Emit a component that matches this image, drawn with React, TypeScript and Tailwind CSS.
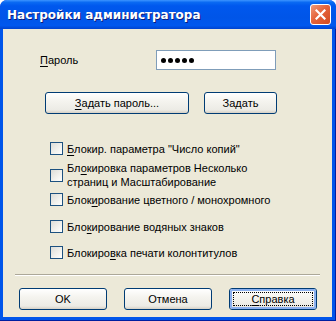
import React from "react";

const font = { fontFamily: '"Liberation Sans", Arial, sans-serif' };

function U({ children }: { children: React.ReactNode }) {
  return <span className="underline underline-offset-[2px]">{children}</span>;
}

function XPButton({
  children,
  className = "",
  isDefault = false,
}: {
  children: React.ReactNode;
  className?: string;
  isDefault?: boolean;
}) {
  return (
    <div
      className={
        "relative flex items-center justify-center rounded-[3px] border border-[#003c74] bg-[linear-gradient(to_bottom,#ffffff_0%,#f5f4ef_40%,#ecebe5_85%,#d6d0c5_100%)] text-[11px] leading-[13px] text-black " +
        className
      }
    >
      {isDefault && (
        <div className="absolute inset-0 rounded-[2px] border-2 border-[#8bb0ef]" />
      )}
      {isDefault && (
        <div className="absolute inset-[3px] border border-dotted border-black" />
      )}
      <span className="relative">{children}</span>
    </div>
  );
}

function Box() {
  return (
    <div className="h-[13px] w-[13px] shrink-0 border border-[#1c5180] bg-[linear-gradient(135deg,#dcdcd7_0%,#f2f2ee_60%,#ffffff_100%)]" />
  );
}

function CheckRow({
  lines,
  className,
}: {
  lines: React.ReactNode[];
  className: string;
}) {
  return (
    <div className={"flex items-center " + className}>
      <Box />
      <div className="ml-[4px] text-[11px] leading-[14px] text-black">
        {lines.map((l, i) => (
          <div key={i}>{l}</div>
        ))}
      </div>
    </div>
  );
}

export default function App() {
  return (
    <div className="h-[321px] w-[336px] overflow-hidden bg-white" style={font}>
      <div className="flex h-[321px] w-[336px] flex-col rounded-t-[7px] bg-[#0831d9]">
        {/* title bar */}
        <div className="flex h-[29px] shrink-0 items-center rounded-t-[7px] bg-[linear-gradient(to_bottom,#3d95ff_0%,#0a6af3_8%,#0058ee_20%,#0055e8_60%,#0058ee_88%,#0043cf_100%)] pl-[7px] pr-[5px]">
          <span
            className="flex-1 font-bold text-white [text-shadow:1px_1px_0_#0f1c78]"
            style={{ fontFamily: '"DejaVu Sans", sans-serif', fontSize: "12px" }}
          >
            Настройки администратора
          </span>
          <div className="flex h-[21px] w-[21px] items-center justify-center rounded-[3px] border border-white bg-[linear-gradient(135deg,#f09a7a_0%,#e5643b_45%,#d24a1f_100%)]">
            <svg width="11" height="11" viewBox="0 0 11 11">
              <path
                d="M1.5 1.5 L9.5 9.5 M9.5 1.5 L1.5 9.5"
                stroke="white"
                strokeWidth="2.2"
                strokeLinecap="square"
              />
            </svg>
          </div>
        </div>
        {/* frame */}
        <div className="flex h-[292px] shrink-0 border-b border-r border-[#001ea0] bg-[#0055ea] px-[3px] pb-[3px]">
          <div className="flex h-[288px] flex-1 flex-col bg-[#ece9d8] text-[11px] text-black">
            {/* password row */}
            <div className="mt-[21px] flex h-[20px] items-center pl-[37px]">
              <span className="w-[116px] leading-[13px]">
                <U>П</U>ароль
              </span>
              <div className="flex h-[20px] w-[120px] items-center gap-[2px] border border-[#7f9db9] bg-white pl-[4px]">
                {[0, 1, 2, 3, 4].map((i) => (
                  <span key={i} className="h-[5px] w-[5px] rounded-full bg-black" />
                ))}
              </div>
            </div>
            {/* buttons row */}
            <div className="mt-[22px] flex h-[22px] pl-[42px]">
              <XPButton className="h-[22px] w-[144px]">
                <U>З</U>адать пароль...
              </XPButton>
              <XPButton className="ml-[15px] h-[22px] w-[73px]">Задать</XPButton>
            </div>
            {/* checkboxes */}
            <div className="flex flex-col pl-[47px]">
              <CheckRow
                className="mt-[28px] h-[13px]"
                lines={[
                  <>
                    <U>Б</U>локир. параметра "Число копий"
                  </>,
                ]}
              />
              <CheckRow
                className="mt-[6px] h-[28px]"
                lines={[
                  <>
                    Бл<U>о</U>кировка параметров Несколько
                  </>,
                  "страниц и Масштабирование",
                ]}
              />
              <CheckRow
                className="mt-[4px] h-[13px]"
                lines={[
                  <>
                    Блок<U>и</U>рование цветного / монохромного
                  </>,
                ]}
              />
              <CheckRow
                className="mt-[14px] h-[13px]"
                lines={[
                  <>
                    Бло<U>к</U>ирование водяных знаков
                  </>,
                ]}
              />
              <CheckRow
                className="mt-[13px] h-[13px]"
                lines={[
                  <>
                    Блокиро<U>в</U>ка печати колонтитулов
                  </>,
                ]}
              />
            </div>
            {/* separator */}
            <div className="mx-[12px] mt-[15px] h-[2px] border-b border-t border-b-white border-t-[#aca899]" />
            {/* bottom buttons */}
            <div className="mt-[12px] flex h-[22px] pl-[16px]">
              <XPButton className="h-[22px] w-[88px]">OK</XPButton>
              <XPButton className="ml-[17px] h-[22px] w-[88px]">Отмена</XPButton>
              <XPButton isDefault className="ml-[17px] h-[22px] w-[88px]">
                <U>С</U>правка
              </XPButton>
            </div>
          </div>
        </div>
      </div>
    </div>
  );
}
